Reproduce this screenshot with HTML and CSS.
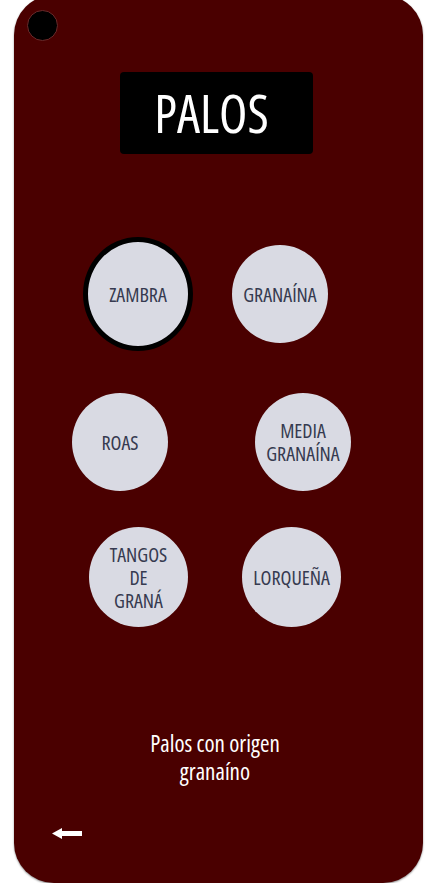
FILE: index.html
```html
<!DOCTYPE html>
<html lang="es">
<head>
  <meta charset="UTF-8">
  <title>Palos</title>
  <link rel="stylesheet" href="styles.css">
</head>
<body>
  <div class="card">
    <div class="dot"></div>

    <div class="title">PALOS</div>

    <div class="row row-1">
      <button class="palo palo-active">Zambra</button>
      <button class="palo">Granaína</button>
    </div>
    <div class="row row-2">
      <button class="palo">Roas</button>
      <button class="palo">Media<br>granaína</button>
    </div>
    <div class="row row-3">
      <button class="palo palo-big">Tangos<br>de<br>graná</button>
      <button class="palo palo-big">Lorqueña</button>
    </div>

    <p class="caption">Palos con origen<br>granaíno</p>

    <a class="back" href="#">
      <svg width="30" height="11" viewBox="0 0 30 11">
        <polygon points="0,5.5 10,0 10,3 30,3 30,8 10,8 10,11" fill="#fff"/>
      </svg>
    </a>
  </div>
</body>
</html>
```

FILE: styles.css
```css
body {
  margin: 0;
  background: #fff;
  font-family: "Open Sans", "Noto Sans", sans-serif;
  font-stretch: 75%;
  overflow: hidden;
}
.card {
  width: 409px;
  height: 888px;
  margin: -5px 0 0 14px;
  background: #4a0000;
  border-radius: 40px;
  box-shadow: 0 1px 2px rgba(0, 0, 0, 0.45);
  display: flex;
  flex-direction: column;
}
.dot {
  width: 29px;
  height: 29px;
  margin: 15px 0 0 13px;
  background: #000;
  border: 1px solid #6a2a2a;
  border-radius: 50%;
}
.title {
  width: 193px;
  height: 82px;
  margin: 31px 0 0 106px;
  background: #000;
  border-radius: 4px;
  color: #fff;
  font-size: 52px;
  line-height: 82px;
  text-align: center;
  padding-right: 10px;
  box-sizing: border-box;
}
.row {
  display: flex;
  align-items: center;
}
.row-1 {
  margin-top: 83px;
  padding-left: 69px;
  gap: 39px;
}
.row-2 {
  margin-top: 42px;
  padding-left: 58px;
  gap: 87px;
}
.row-3 {
  margin-top: 36px;
  padding-left: 75px;
  gap: 54px;
}
.palo {
  width: 96px;
  height: 98px;
  padding: 0;
  border: none;
  border-radius: 50%;
  background: #d9dae3;
  color: #363a50;
  font-family: inherit;
  font-stretch: inherit;
  font-size: 20px;
  line-height: 23px;
  text-transform: uppercase;
  text-align: center;
  cursor: pointer;
}
.palo-active {
  width: 110px;
  height: 114px;
  border: 5px solid #000;
}
.palo-big {
  width: 99px;
  height: 100px;
}
.caption {
  margin: 102px 0 0;
  padding-right: 7px;
  color: #fff;
  font-size: 23px;
  line-height: 28px;
  text-align: center;
}
.back {
  display: block;
  width: 30px;
  height: 11px;
  margin: 43px 0 0 38px;
}
.back svg {
  display: block;
}
```
